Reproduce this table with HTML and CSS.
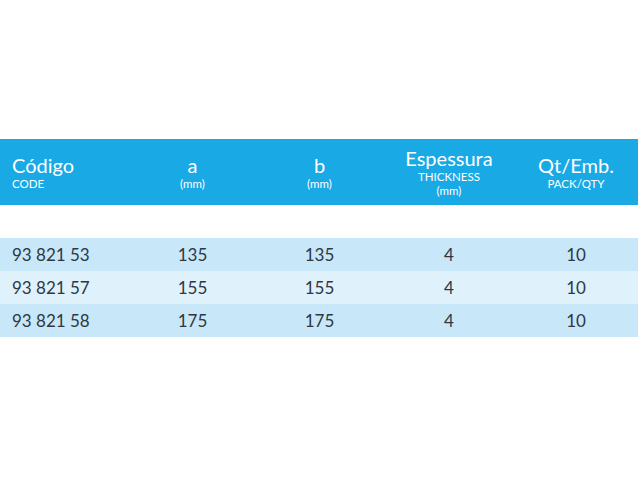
FILE: index.html
```html
<!DOCTYPE html>
<html>
<head>
<meta charset="utf-8">
<link rel="stylesheet" href="styles.css">
</head>
<body>
<div class="table">
  <div class="head">
    <div class="cell first"><div class="big">Código</div><div class="small">CODE</div></div>
    <div class="cell"><div class="big">a</div><div class="small">(mm)</div></div>
    <div class="cell"><div class="big">b</div><div class="small">(mm)</div></div>
    <div class="cell"><div class="big">Espessura</div><div class="small">THICKNESS</div><div class="small">(mm)</div></div>
    <div class="cell"><div class="big">Qt/Emb.</div><div class="small">PACK/QTY</div></div>
  </div>
  <div class="gap"></div>
  <div class="row dark">
    <div class="cell first">93 821 53</div><div class="cell">135</div><div class="cell">135</div><div class="cell">4</div><div class="cell">10</div>
  </div>
  <div class="row light">
    <div class="cell first">93 821 57</div><div class="cell">155</div><div class="cell">155</div><div class="cell">4</div><div class="cell">10</div>
  </div>
  <div class="row dark">
    <div class="cell first">93 821 58</div><div class="cell">175</div><div class="cell">175</div><div class="cell">4</div><div class="cell">10</div>
  </div>
</div>
</body>
</html>
```
FILE: styles.css
```css
html, body {
  margin: 0;
  padding: 0;
  background: #ffffff;
}
body {
  font-family: "Lato", "Open Sans", sans-serif;
  padding-top: 139px;
}
.table {
  width: 638px;
}
.head, .row {
  display: grid;
  grid-template-columns: 130px 125px 129px 130px 124px;
  align-items: center;
}
.head {
  background: #19a9e5;
  height: 66px;
  color: #ffffff;
}
.cell {
  text-align: center;
}
.cell.first {
  text-align: left;
  padding-left: 12px;
}
.big {
  font-size: 20px;
  line-height: 24px;
}
.small {
  font-size: 11.5px;
  line-height: 14px;
}
.gap {
  height: 33px;
}
.row {
  height: 33px;
  font-size: 17px;
  color: #2e3844;
}
.row.dark {
  background: #c8e7f8;
}
.row.light {
  background: #dff1fb;
}
```
